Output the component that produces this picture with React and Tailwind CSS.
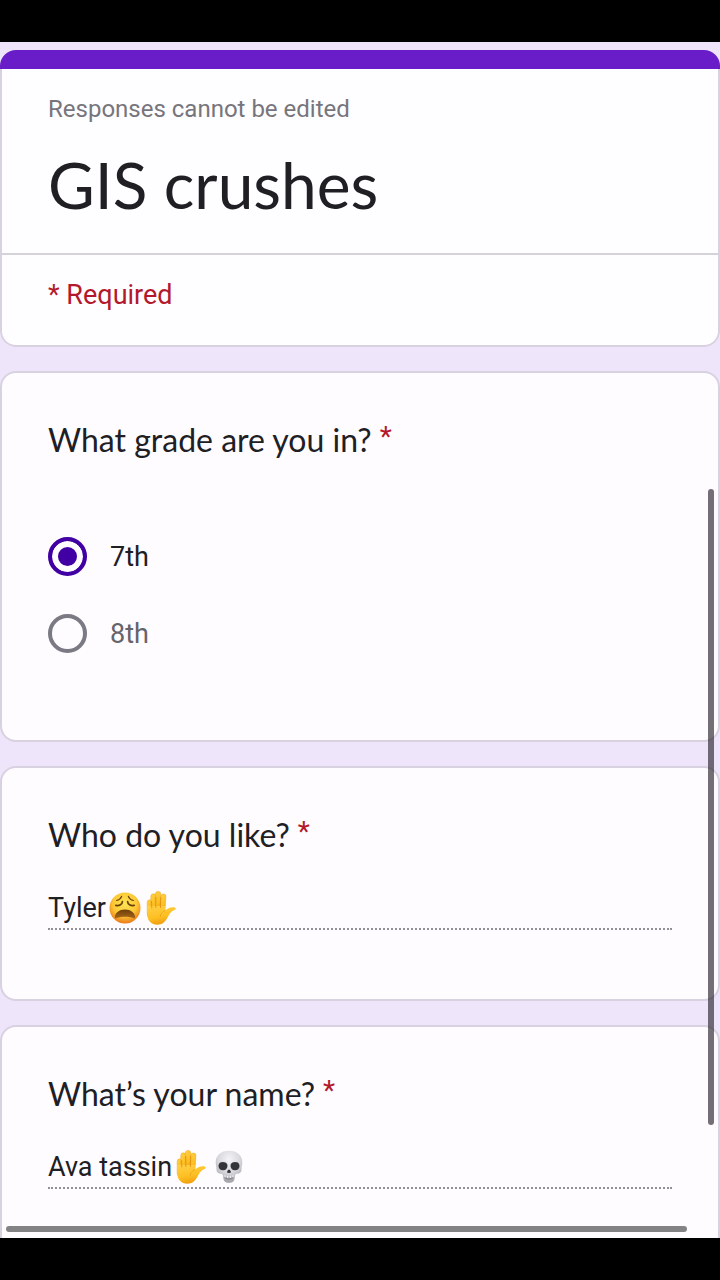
import { useState } from 'react'

function WearyFace() {
  return (
    <svg className="h-8 w-8 shrink-0" viewBox="0 0 32 32" role="img" aria-label="weary face">
      <defs>
        <radialGradient id="face" cx="50%" cy="36%" r="64%">
          <stop offset="0" stopColor="#fee455" />
          <stop offset="0.6" stopColor="#fcc834" />
          <stop offset="1" stopColor="#ea7a1c" />
        </radialGradient>
        <linearGradient id="mouth" x1="0" y1="0" x2="0" y2="1">
          <stop offset="0" stopColor="#6b3d08" />
          <stop offset="1" stopColor="#a8661a" />
        </linearGradient>
      </defs>
      <circle cx="16" cy="16" r="15.5" fill="url(#face)" />
      <g fill="none" stroke="#6b410b" strokeLinecap="round">
        <path d="M12.600 4.400C11.700 6.600 10 7.900 7.600 8.500" strokeWidth="1.200" />
        <path d="M19.400 4.400C20.300 6.600 22 7.900 24.400 8.500" strokeWidth="1.200" />
        <path d="M13.400 9.600C13.200 12.400 10.600 14 6.800 13.400" strokeWidth="1.700" />
        <path d="M18.600 9.600C18.800 12.400 21.400 14 25.200 13.400" strokeWidth="1.700" />
      </g>
      <path d="M16 17.400c-5.800 0-9.700 3.300-10.200 7.600-.1 1.200.8 1.500 1.800 1.100 5-1.900 11.800-1.900 16.800 0 1 .4 1.900.1 1.800-1.100-.5-4.300-4.400-7.600-10.200-7.600z" fill="url(#mouth)" />
    </svg>
  )
}

function RaisedHand() {
  return (
    <svg className="h-9 w-8 shrink-0" viewBox="0 0 32 36" role="img" aria-label="raised hand">
      <defs>
        <linearGradient id="hand" x1="0" y1="0" x2="0.3" y2="1">
          <stop offset="0" stopColor="#ffd046" />
          <stop offset="0.65" stopColor="#fdbf22" />
          <stop offset="1" stopColor="#f0a010" />
        </linearGradient>
      </defs>
      <g fill="url(#hand)" stroke="#eea51c" strokeWidth="0.5">
        <rect x="2.200" y="9.800" width="5.200" height="17" rx="2.600" />
        <rect x="5.800" y="3.800" width="5.400" height="20" rx="2.700" />
        <rect x="10.400" y="1.400" width="5.400" height="20" rx="2.700" />
        <rect x="15.400" y="4" width="5" height="20" rx="2.500" transform="rotate(4 18 14)" />
      </g>
      <path
        d="M2.200 16v8c0 6.500 4 10.700 10.200 10.700 4.800 0 7.400-2.300 9.600-6.100 2-3.400 3.400-6.800 7.400-8.500 2.200-1 1.600-2.900-1.300-2.900-3.700 0-5.900 1.500-8 3.500V16z"
        fill="url(#hand)"
      />
      <g fill="none" stroke="#dc8d0d" strokeLinecap="round" strokeWidth="0.8">
        <path d="M6.600 11.500l.2 6.500M10.800 7.500v10M15.700 7.500l-.2 10" />
        <path d="M20.100 20.700c-3 1-4.700 3.100-4.900 6" strokeOpacity="0.55" />
      </g>
    </svg>
  )
}

function Skull() {
  return (
    <svg className="h-9 w-7 shrink-0" viewBox="0 0 28 36" role="img" aria-label="skull">
      <defs>
        <radialGradient id="skull" cx="50%" cy="28%" r="70%">
          <stop offset="0" stopColor="#f4f3f6" />
          <stop offset="0.6" stopColor="#d8d7dc" />
          <stop offset="1" stopColor="#a2a1a8" />
        </radialGradient>
      </defs>
      <path d="M14 1.800C5.600 1.800.7 6.700.7 13.200c0 3.500 1 5 .8 7.200-.2 2.500 1.600 4 4.600 4.400 1.900.3 1.900 1.600 2.100 3.600.3 3.900 2.400 5.300 5.800 5.300s5.500-1.400 5.800-5.300c.2-2 .2-3.300 2.100-3.600 3-.4 4.800-1.900 4.600-4.400-.2-2.200.8-3.700.8-7.200C27.300 6.700 22.400 1.800 14 1.800z" fill="url(#skull)" />
      <path d="M9 27c1 1.500 2.700 2 5 2s4-.5 5-2l-.4 1.900c-.6 1.300-2.300 1.800-4.600 1.800s-4-.5-4.600-1.800z" fill="#8f8e95" />
      <g fill="#34343b">
        <path d="M5.200 13.600c2.200-1.300 6-.7 7 1.600.9 2.400-.5 5.400-3.300 6-3 .6-5.300-1.400-5.400-4 0-1.600.6-2.900 1.700-3.600z" />
        <path d="M22.800 13.600c-2.200-1.300-6-.7-7 1.600-.9 2.400.5 5.400 3.300 6 3 .6 5.300-1.400 5.400-4 0-1.600-.6-2.900-1.700-3.600z" />
        <path d="M14 20.600c-1.200 0-2.300 2.400-1.600 3.200.5.5 1.100.2 1.600-.1.500.3 1.100.6 1.600.1.700-.8-.4-3.200-1.600-3.200z" />
      </g>
      <g fill="none" stroke="#f8f8fa" strokeWidth="1">
        <path d="M10 26.300v2M12.600 26.800v2M15.400 26.800v2M18 26.300v2" />
      </g>
    </svg>
  )
}

function Card({ children, className = '' }) {
  return (
    <section className={`shrink-0 rounded-2xl border-2 border-[#d8d1e0] bg-[#fefcff] px-[46px] pt-12 ${className}`}>
      {children}
    </section>
  )
}

function QuestionTitle({ children }) {
  return (
    <span className="flex items-start gap-2 font-[Lato,sans-serif] text-[32px] leading-[38px]">
      {children}
      <span className="font-[Roboto] text-[28px] leading-8 text-[#b3192d]">*</span>
    </span>
  )
}

function TextQuestion({ id, title, value, onChange, children }) {
  return (
    <Card className="pb-[69px]">
      <label htmlFor={id} className="block">
        <QuestionTitle>{title}</QuestionTitle>
      </label>
      <div className="mt-[34px] flex h-[42px] items-center border-b-2 border-dotted border-[#929097]">
        <input
          id={id}
          type="text"
          value={value}
          onChange={onChange}
          className="[field-sizing:content] bg-transparent text-[27px] leading-8 outline-none"
        />
        {children}
      </div>
    </Card>
  )
}

export default function App() {
  const [grade, setGrade] = useState('7th')
  const [crush, setCrush] = useState('Tyler')
  const [name, setName] = useState('Ava tassin')

  return (
    <div className="flex h-screen flex-col bg-black py-[42px] font-[Roboto,sans-serif] text-[#202024]">
      <main className="relative min-h-0 flex-1 overflow-hidden bg-[#eee5fb]">
        <form className="flex flex-col gap-6 pt-2">
          <header className="shrink-0 overflow-hidden rounded-2xl">
            <div className="h-[19px] bg-[#681dc8]" />
            <div className="rounded-b-2xl border-2 border-t-0 border-[#d8d1e0] bg-[#fefdff]">
              <div className="border-b-2 border-[#d5d2d9] px-[46px] pt-6 pb-[30px]">
                <p className="text-2xl leading-8 text-[#77757c]">Responses cannot be edited</p>
                <h1 className="mt-[22px] font-[Lato,sans-serif] text-[64px] leading-[76px]">GIS crushes</h1>
              </div>
              <p className="px-[46px] pt-6 pb-[34px] text-[27px] leading-8 text-[#b3192d]">* Required</p>
            </div>
          </header>

          <Card className="pb-[87px]">
            <fieldset>
              <legend>
                <QuestionTitle>What grade are you in?</QuestionTitle>
              </legend>
              <div className="mt-[78px] flex flex-col items-start gap-[38px]">
                {['7th', '8th'].map((option) => (
                  <label key={option} className="flex items-center gap-[23px] text-[27px] leading-8 text-[#66646b] has-checked:text-[#202024]">
                    <input
                      type="radio"
                      name="grade"
                      value={option}
                      checked={grade === option}
                      onChange={() => setGrade(option)}
                      className="size-[39px] appearance-none rounded-full border-4 border-[#7b7983] checked:border-[#4100a3] checked:bg-[#4100a3] checked:shadow-[inset_0_0_0_6px_#fefcff]"
                    />
                    {option}
                  </label>
                ))}
              </div>
            </fieldset>
          </Card>

          <TextQuestion id="crush" title="Who do you like?" value={crush} onChange={(e) => setCrush(e.target.value)}>
            <div className="flex items-center gap-1 pl-[3px]">
              <WearyFace />
              <RaisedHand />
            </div>
          </TextQuestion>

          <TextQuestion id="name" title="What’s your name?" value={name} onChange={(e) => setName(e.target.value)}>
            <div className="flex items-center gap-2 pl-[3px]">
              <RaisedHand />
              <Skull />
            </div>
          </TextQuestion>
        </form>

        {/* overlay scrollbars */}
        <div className="absolute top-[447px] right-[6px] h-[636px] w-[6px] rounded-full bg-[#29232d]/65" />
        <div className="absolute right-[33px] bottom-[6px] left-[6px] h-[6px] rounded-full bg-[#838284]" />
      </main>
    </div>
  )
}
